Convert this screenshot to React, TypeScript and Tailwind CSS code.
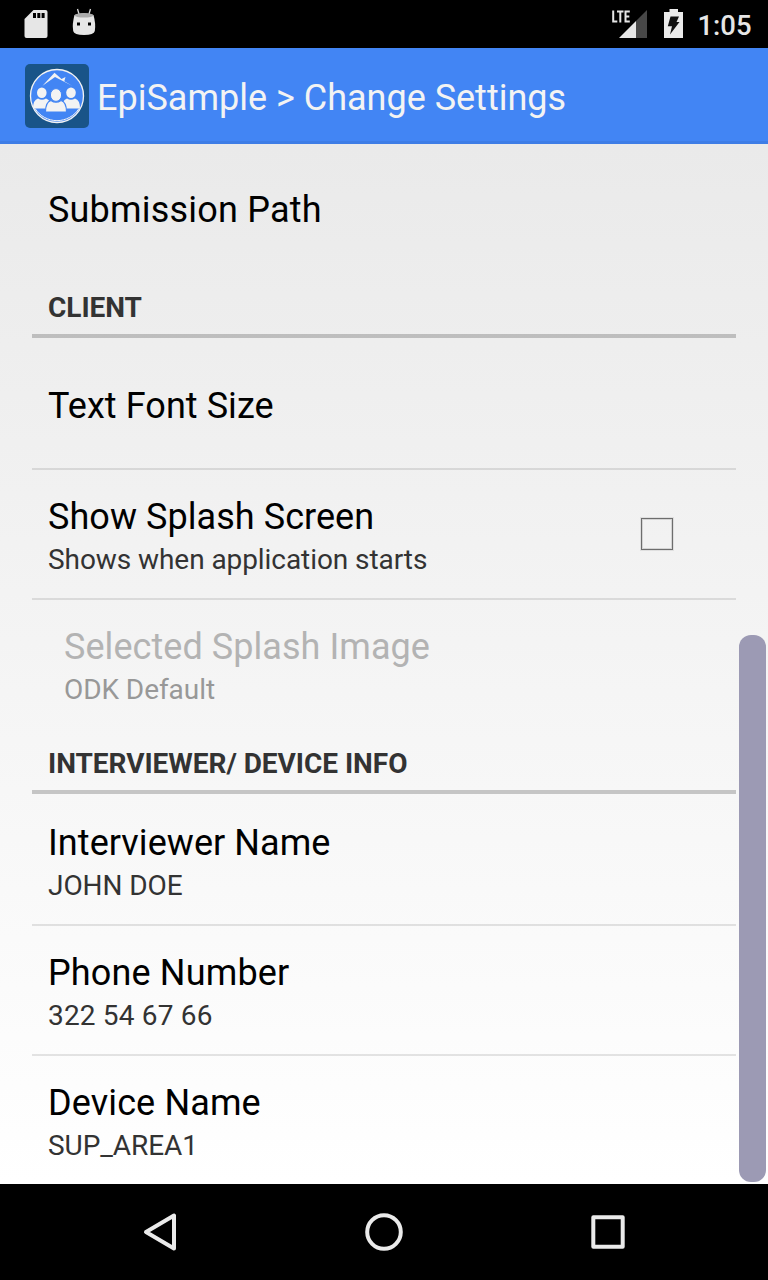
import type { ReactNode } from "react";

function StatusBar() {
  return (
    <div className="flex h-12 shrink-0 bg-black">
      <svg width="768" height="48" viewBox="0 0 768 48" role="img" aria-label="Status bar">
        <path d="M33.500 10H45.500Q47.500 10 47.500 12V36Q47.500 38 45.500 38H26.500Q24.500 38 24.500 36V19Z" fill="#e6e6e6" />
        <path d="M33 13h3v5h-3zM37.3 13h3v5h-3zM41.6 13h3v5h-3z" fill="#000" />
        <path d="M77.500 9l1.500 5M90.500 9l-1.500 5" stroke="#d9d9d9" strokeWidth="1.300" />
        <path d="M74.500 15Q84 11.500 93.500 15Q96 24 94.800 31Q94 35 84 35T73.200 31Q72 24 74.500 15Z" fill="#e6e6e6" />
        <ellipse cx="84" cy="15.300" rx="9.300" ry="2.300" fill="#aaa" />
        <path d="M77 22.500h3v3h-3zM88 22.500h3v3h-3z" fill="#000" />
        <path d="M619 38L636 21V38Z" fill="#e6e6e6" />
        <path d="M636 21L647 10V38H636Z" fill="#484848" />
        <path d="M613.200 10.500V21.500H617.300M617 11.500H623.500M620.300 11.500V22.500M629.800 11.500H625.500V21.500H629.800M625.500 16.500H629.300" fill="none" stroke="#e6e6e6" strokeWidth="2" />
        <path d="M669.500 9H678V12H683V38H664V12H669.500Z" fill="#ebebeb" />
        <path d="M670.500 16.500H679L676.500 22H679.500L670 34.500L672 26.300H667.800Z" fill="#111" />
        <text x="697.500" y="35" fill="#e6e6e6" fontFamily="Roboto" fontSize="28" fontWeight="500" textLength="54" lengthAdjust="spacingAndGlyphs">1:05</text>
      </svg>
    </div>
  );
}

function AppLogo() {
  return (
    <svg width="64" height="64" viewBox="0 0 64 64" className="shrink-0">
      <rect width="64" height="64" rx="5" fill="#195488" />
      <circle cx="32" cy="32" r="26.500" fill="#4285f4" stroke="#f3f3f3" strokeWidth="1.300" />
      <path d="M10 46A26 26 0 0 0 54 46" fill="none" stroke="#f3f3f3" strokeWidth="1" transform="translate(0 -1.500)" />
      <path d="M17.500 21.800L29.500 8.800L36.500 15L40.500 13L39.300 17.300L47.500 22L30 13Z" fill="#f3f3f3" />
      <g fill="#f3f3f3">
        <ellipse cx="16.800" cy="28.800" rx="4.800" ry="5.300" />
        <path d="M8 44.500Q8 36 13 34.500Q17 37 21 34.500Q26 36 26 44.500Z" />
        <ellipse cx="46" cy="28.800" rx="4.800" ry="5.300" />
        <path d="M37 44.500Q37 36 42 34.500Q46 37 50 34.500Q55 36 55 44.500Z" />
      </g>
      <path d="M20.500 48Q20.500 38 26 36.500Q31 40 36 36.500Q41.500 38 41.500 48Z" fill="#f3f3f3" stroke="#4285f4" strokeWidth="1.200" />
      <ellipse cx="31" cy="31" rx="5.600" ry="6.400" fill="#f3f3f3" stroke="#4285f4" strokeWidth="1" />
    </svg>
  );
}

function Section({ children }: { children: ReactNode }) {
  return (
    <h2 className="h-[66px] shrink-0 border-b-4 border-black/20 pl-4 pt-[19px] text-[28px] font-bold leading-[33px] tracking-[-0.03px] text-[#333]">
      {children}
    </h2>
  );
}

type RowProps = {
  title: string;
  summary?: string;
  afterSection?: boolean;
  divider?: boolean;
  disabled?: boolean;
  titleTracking?: string;
  summaryTracking?: string;
  children?: ReactNode;
};

function Row({
  title,
  summary,
  afterSection,
  divider,
  disabled,
  titleTracking = "tracking-[0.06px]",
  summaryTracking = "tracking-[-0.07px]",
  children,
}: RowProps) {
  return (
    <>
      <div className={`flex shrink-0 justify-between ${afterSection ? "h-[130px] pt-0.5" : "h-32"} ${disabled ? "pl-8" : "pl-4"}`}>
        <div className={summary ? "pt-[26px]" : "pt-[45px]"}>
          <div className={`text-[36px] leading-[42px] ${titleTracking} ${disabled ? "text-[#b3b3b3]" : "text-black"}`}>{title}</div>
          {summary && (
            <div className={`mt-[5px] text-[28px] leading-[33px] ${summaryTracking} ${disabled ? "text-[#989898]" : "text-[#333]"}`}>
              {summary}
            </div>
          )}
        </div>
        {children}
      </div>
      {divider && <div className="h-0.5 shrink-0 bg-black/10" />}
    </>
  );
}

export default function App() {
  return (
    <div className="flex h-[1280px] w-[768px] flex-col overflow-hidden bg-black font-[Roboto,sans-serif]">
      <StatusBar />
      <header className="flex h-24 shrink-0 items-start border-b-3 border-[#3e7de6] bg-[#4285f4] pl-[25px] pt-4">
        <AppLogo />
        <h1 className="ml-2 mt-[13px] text-[36px] leading-[42px] text-[#f3f3f3]">EpiSample &gt; Change Settings</h1>
      </header>
      <main className="relative flex h-[1040px] shrink-0 flex-col bg-linear-to-b from-[#eaeaea] to-white px-8">
        <Row title="Submission Path" titleTracking="tracking-[0.2px]" />
        <Section>CLIENT</Section>
        <Row title="Text Font Size" afterSection divider />
        <Row title="Show Splash Screen" summary="Shows when application starts" divider>
          <div className="mr-[63px] size-8 self-center border border-[#6d6d6d] shadow-[0_0_0_1px_rgba(0,0,0,0.08),inset_0_0_0_1px_rgba(0,0,0,0.12)]" />
        </Row>
        <Row title="Selected Splash Image" summary="ODK Default" disabled />
        <Section>INTERVIEWER/ DEVICE INFO</Section>
        <Row title="Interviewer Name" summary="JOHN DOE" afterSection divider />
        <Row
          title="Phone Number"
          summary="322 54 67 66"
          divider
          titleTracking="tracking-[0.15px]"
          summaryTracking="tracking-[0.18px]"
        />
        <Row title="Device Name" summary="SUP_AREA1" titleTracking="tracking-[0.12px]" />
        <div className="absolute right-[2px] top-[491px] h-[547px] w-[27px] rounded-[12px] bg-[#9c9ab4]" />
      </main>
      <nav className="flex h-24 shrink-0 items-center justify-center bg-black">
        <svg width="500" height="96" viewBox="-10 0 500 96" fill="none" stroke="#ebebeb" strokeWidth="4" strokeLinejoin="round">
          <path d="M30 31.500V64.500L2 48Z" />
          <circle cx="240" cy="48" r="16.800" />
          <rect x="449.300" y="33.300" width="29.400" height="29.400" />
        </svg>
      </nav>
    </div>
  );
}
